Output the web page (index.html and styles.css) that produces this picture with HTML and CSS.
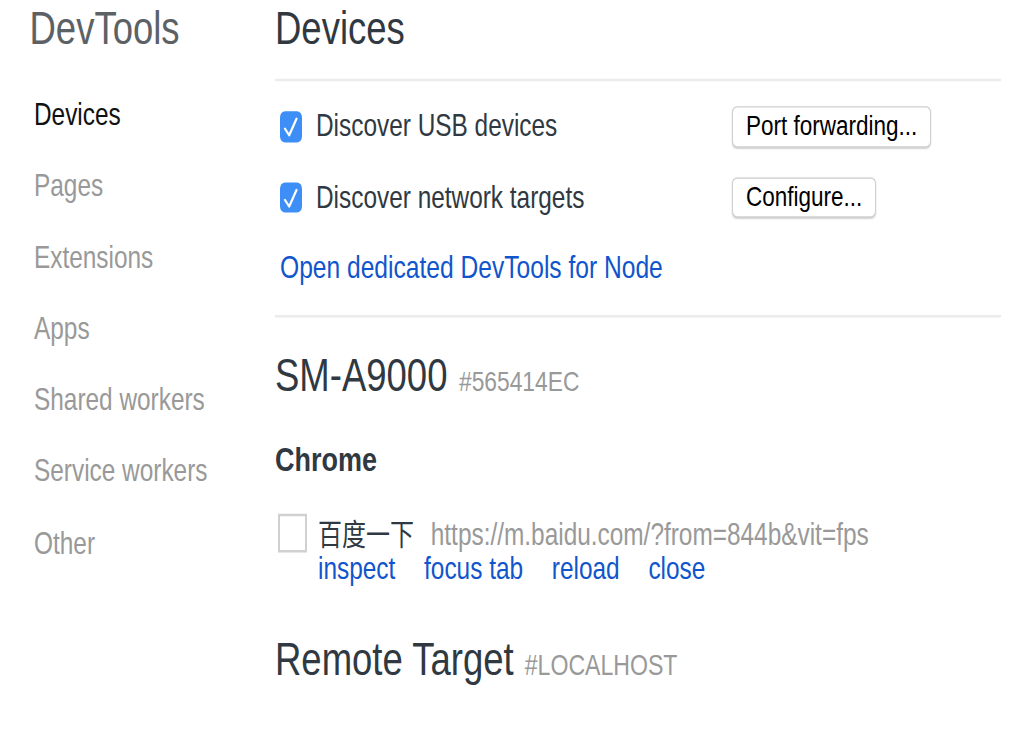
FILE: index.html
```html
<!DOCTYPE html>
<html lang="en">
<head>
  <meta charset="UTF-8" />
  <title>Inspect with Chrome Developer Tools</title>
  <link rel="stylesheet" href="styles.css">
</head>
<body>

  <!-- the reference is drawn a bit taller than wide, so the page is stretched vertically -->
  <div class="page">
    <nav class="sidebar">
      <h1 class="brand">DevTools</h1>
      <ul class="nav-list">
        <li class="active">Devices</li>
        <li>Pages</li>
        <li>Extensions</li>
        <li>Apps</li>
        <li>Shared workers</li>
        <li>Service workers</li>
        <li>Other</li>
      </ul>
    </nav>

    <main class="content">
      <h1 class="page-title">Devices</h1>
      <hr class="divider" />

      <div class="settings">
        <div class="setting-row">
          <label class="check">
            <span class="checkbox">
              <svg viewBox="0 0 22 31" preserveAspectRatio="none"><path d="M5 17.5 L9.2 24 L16.5 7.5" fill="none" stroke="#fff" stroke-width="2.2" stroke-linecap="round" stroke-linejoin="round"/></svg>
            </span>
            Discover USB devices
          </label>
          <button class="btn">Port forwarding...</button>
        </div>
        <div class="setting-row">
          <label class="check">
            <span class="checkbox">
              <svg viewBox="0 0 22 31" preserveAspectRatio="none"><path d="M5 17.5 L9.2 24 L16.5 7.5" fill="none" stroke="#fff" stroke-width="2.2" stroke-linecap="round" stroke-linejoin="round"/></svg>
            </span>
            Discover network targets
          </label>
          <button class="btn">Configure...</button>
        </div>
        <div class="setting-row">
          <a class="node-link" href="#">Open dedicated DevTools for Node</a>
        </div>
      </div>
      <hr class="divider divider-low" />

      <section class="device">
        <h2 class="device-name">SM-A9000<span class="serial">#565414EC</span></h2>
        <h3 class="browser-name">Chrome</h3>
        <div class="target-row">
          <div class="thumb"></div>
          <div class="target-info">
            <div class="target-line">
              <span class="target-title">百度一下</span>
              <span class="target-url">https://m.baidu.com/?from=844b&amp;vit=fps</span>
            </div>
            <div class="actions">
              <a href="#">inspect</a>
              <a href="#">focus tab</a>
              <a href="#">reload</a>
              <a href="#">close</a>
            </div>
          </div>
        </div>
      </section>

      <section class="device device-remote">
        <h2 class="device-name">Remote Target<span class="serial">#LOCALHOST</span></h2>
      </section>
    </main>
  </div>

</body>
</html>
```

FILE: styles.css
```css
* {
  margin: 0;
  padding: 0;
  box-sizing: border-box;
}

html {
  overflow: hidden;
}

body {
  min-height: 736px;
  background: #fff;
  font-family: "Liberation Sans", Arial, "Noto Sans CJK SC", sans-serif;
  color: #303942;
}

.page {
  display: flex;
  align-items: flex-start;
  width: 1027px;
  transform: scaleY(1.25);
  transform-origin: 0 0;
}

/* left navigation */
.sidebar {
  width: 275px;
  flex-shrink: 0;
  padding: 0.75px 0 0 29.5px;
}

.brand {
  font-size: 36.5px;
  line-height: 44px;
  font-weight: normal;
  color: #5c6166;
}

.nav-list {
  list-style: none;
  margin-top: 18px;
}

.nav-list li {
  padding-left: 4.5px;
  font-size: 24.4px;
  line-height: 57.12px;
  color: #999;
}

.nav-list li.active {
  color: #111;
}

/* main column */
.content {
  width: 726px;
  padding-top: 0.75px;
}

.page-title {
  font-size: 36.5px;
  line-height: 44px;
  font-weight: normal;
  color: #303942;
}

.divider {
  border: none;
  height: 1.6px;
  background: #ececec;
  margin-top: 18.45px;
}

.divider-low {
  margin-top: 20.8px;
}

.settings {
  display: flex;
  flex-direction: column;
  gap: 24px;
  padding: 20px 0 0 5px;
}

.setting-row {
  display: flex;
  align-items: center;
  height: 32.8px;
}

.check {
  display: flex;
  align-items: center;
  width: 452px;
  font-size: 24.4px;
  line-height: 32.8px;
  color: #303942;
}

.checkbox {
  display: block;
  width: 22px;
  height: 24.8px;
  margin-right: 14px;
  border-radius: 5px;
  background: #3d8ef7;
}

.checkbox svg {
  display: block;
  width: 22px;
  height: 24.8px;
}

.btn {
  height: 32.8px;
  padding: 0 13px;
  font-family: inherit;
  font-size: 22.5px;
  color: #000;
  background: #fff;
  border: 1px solid #cfcfcf;
  border-radius: 5px;
  box-shadow: 0 1px 1.5px rgba(0, 0, 0, 0.18);
}

.node-link {
  font-size: 24.6px;
  line-height: 32.8px;
  color: #1155cc;
  text-decoration: none;
}

/* devices */
.device-name {
  margin-top: 25.15px;
  font-size: 36.5px;
  line-height: 44px;
  font-weight: normal;
  color: #303942;
}

.serial {
  margin-left: 11.5px;
  font-size: 22.8px;
  color: #999;
}

.browser-name {
  margin-top: 25.5px;
  font-size: 27px;
  line-height: 32px;
  font-weight: bold;
  color: #303942;
}

.target-row {
  display: flex;
  margin-top: 27.2px;
  padding-left: 3px;
}

.thumb {
  width: 29px;
  height: 30.4px;
  border: 2px solid #d0d0d0;
  margin-right: 11px;
}

.target-info {
  display: flex;
  flex-direction: column;
  padding-top: 1.6px;
}

.target-line,
.actions {
  height: 26.2px;
  font-size: 24.4px;
  line-height: 26.2px;
  white-space: nowrap;
}

.actions {
  margin-top: 2.4px;
}

.target-title {
  font-family: "Noto Sans CJK SC", sans-serif;
  font-size: 24px;
  line-height: 26.2px;
  color: #303942;
  margin-right: 10px;
}

.target-url {
  color: #999;
}

.actions a {
  color: #1155cc;
  text-decoration: none;
  margin-right: 22px;
}

.device-remote .device-name {
  margin-top: 38.5px;
}

.device-remote .serial {
  margin-left: 11px;
  font-size: 23.1px;
}
```
